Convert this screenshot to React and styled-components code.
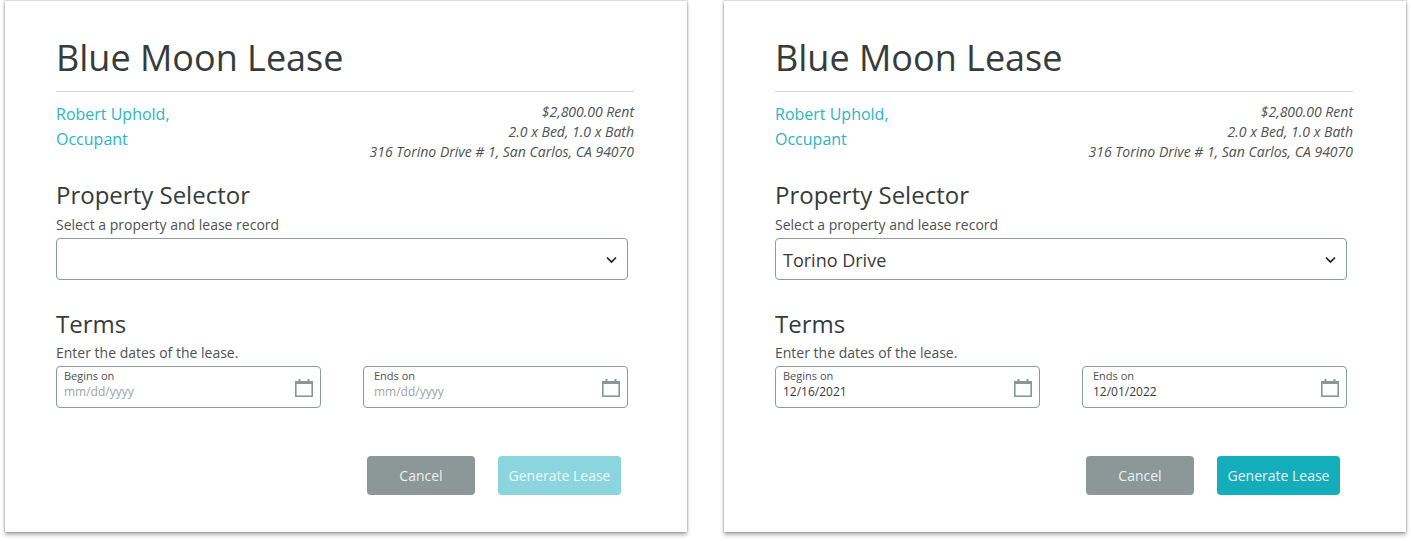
import styled, { createGlobalStyle } from 'styled-components'

const GlobalStyle = createGlobalStyle`
    body{
        margin:0;
        background:#fff;
        font-family:"Open Sans", sans-serif;
        color:#363b3b;
    }
`

const Page = styled.div`
    display:flex;
    gap:37px;
    padding:0 5px;
    width:1411px;
    height:541px;
    box-sizing:border-box;
    overflow:hidden;
`

const Card = styled.div`
    width:682px;
    height:532px;
    flex:none;
    box-sizing:border-box;
    padding:0 53px 0 51px;
    background:#fff;
    border-top:1px solid #dcdcdc;
    box-shadow:0 3px 4px rgba(0,0,0,0.3), 0 0 2px rgba(0,0,0,0.35);
`

const Title = styled.h1`
    margin:0;
    height:91px;
    box-sizing:border-box;
    padding-top:34px;
    border-bottom:1px solid #d4d6d6;
    font-size:36px;
    line-height:46px;
    font-weight:400;
`

const Meta = styled.div`
    display:flex;
    justify-content:space-between;
    padding-top:10px;
`

const Occupant = styled.div`
    color:#2bb5c3;
    font-size:16px;
    line-height:25px;
`

const Details = styled.div`
    text-align:right;
    font-style:italic;
    font-size:14px;
    line-height:20px;
    color:#4d5252;
`

const SectionTitle = styled.h2`
    margin:${(p) => p.$top}px 0 0;
    font-size:24px;
    line-height:32px;
    font-weight:400;
`

const Hint = styled.div`
    font-size:14px;
    line-height:20px;
    margin-top:${(p) => p.$top}px;
    color:#4d5252;
`

const Select = styled.div`
    width:572px;
    height:42px;
    margin-top:3px;
    padding:2px 10px 0 7px;
    box-sizing:border-box;
    display:flex;
    align-items:center;
    justify-content:space-between;
    border:1px solid #8e9c9c;
    border-radius:4px;
    font-size:18px;
    color:#363b3b;
`

const DateRow = styled.div`
    width:572px;
    display:flex;
    justify-content:space-between;
    margin-top:3px;
`

const DateField = styled.div`
    width:265px;
    height:42px;
    box-sizing:border-box;
    display:flex;
    align-items:center;
    justify-content:space-between;
    padding:0 7px;
    border:1px solid #8e9c9c;
    border-radius:4px;
`

const DateText = styled.div`
    display:flex;
    flex-direction:column;
    padding-left:${(p) => p.$inset}px;
    padding-bottom:4px;
`

const DateLabel = styled.span`
    font-size:11px;
    line-height:14px;
    color:#4d5252;
`

const DateValue = styled.span`
    font-size:12px;
    line-height:18px;
    color:${(p) => (p.$empty ? '#9aa6a6' : '#363b3b')};
`

const CalendarSvg = styled.svg`
    margin-top:2px;
`

const Actions = styled.div`
    width:565px;
    display:flex;
    justify-content:flex-end;
    gap:23px;
    margin-top:48px;
`

const Button = styled.button`
    height:39px;
    width:${(p) => p.$width}px;
    padding:0;
    border:none;
    border-radius:4px;
    font-family:inherit;
    font-size:14px;
    color:${(p) => (p.$faded ? '#eef9fa' : '#eaf2f2')};
    background:${(p) => p.$bg};
`

const Chevron = () => (
    <svg width="11" height="8" viewBox="0 0 11 8" fill="none">
        <path d="M1 1.5L5.5 6 10 1.5" stroke="#1c2020" strokeWidth="1.7" />
    </svg>
)

const CalendarIcon = () => (
    <CalendarSvg width="18" height="18" viewBox="0 0 18 18" fill="none">
        <path d="M4.5 0v3M13.5 0v3" stroke="#8a9797" strokeWidth="2" />
        <rect x="0.8" y="2.8" width="16.4" height="14.4" fill="none" stroke="#8a9797" strokeWidth="1.6" />
        <rect x="1" y="2.5" width="16" height="2.5" fill="#8a9797" />
    </CalendarSvg>
)

const LeaseCard = ({ property, begins, ends, ready }) => (
    <Card>
        <Title>Blue Moon Lease</Title>
        <Meta>
            <Occupant>Robert Uphold,<br />Occupant</Occupant>
            <Details>
                $2,800.00 Rent<br />
                2.0 x Bed, 1.0 x Bath<br />
                316 Torino Drive # 1, San Carlos, CA 94070
            </Details>
        </Meta>
        <SectionTitle $top={17}>Property Selector</SectionTitle>
        <Hint $top={4}>Select a property and lease record</Hint>
        <Select>
            <span>{property}</span>
            <Chevron />
        </Select>
        <SectionTitle $top={28}>Terms</SectionTitle>
        <Hint $top={3}>Enter the dates of the lease.</Hint>
        <DateRow>
            <DateField>
                <DateText $inset={0}>
                    <DateLabel>Begins on</DateLabel>
                    <DateValue $empty={!begins}>{begins || 'mm/dd/yyyy'}</DateValue>
                </DateText>
                <CalendarIcon />
            </DateField>
            <DateField>
                <DateText $inset={3}>
                    <DateLabel>Ends on</DateLabel>
                    <DateValue $empty={!ends}>{ends || 'mm/dd/yyyy'}</DateValue>
                </DateText>
                <CalendarIcon />
            </DateField>
        </DateRow>
        <Actions>
            <Button $width={108} $bg="#8c9797">Cancel</Button>
            <Button $width={123} $bg={ready ? '#14adbc' : '#8ad5de'} $faded={!ready}>Generate Lease</Button>
        </Actions>
    </Card>
)

const App = () => (
    <Page>
        <GlobalStyle />
        <LeaseCard />
        <LeaseCard property="Torino Drive" begins="12/16/2021" ends="12/01/2022" ready />
    </Page>
)

export default App
